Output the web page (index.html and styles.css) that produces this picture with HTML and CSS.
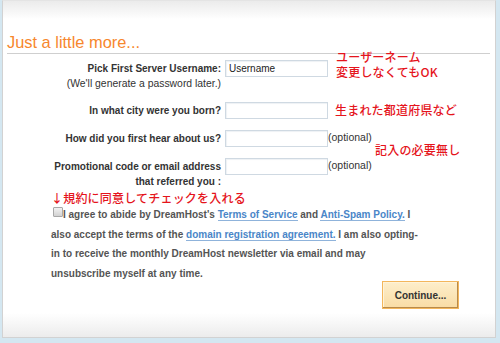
FILE: index.html
```html
<!DOCTYPE html>
<html lang="ja">
<head>
  <meta charset="UTF-8" />
  <title>Just a little more...</title>
  <link rel="stylesheet" href="styles.css">
</head>
<body>

<div class="panel">
  <h1>Just a little more...</h1>

  <div class="form">
    <div class="row">
      <div class="label"><b>Pick First Server Username:</b><br>(We'll generate a password later.)</div>
      <input class="field" type="text" value="Username">
      <div class="note note-up">ユーザーネーム<br>変更しなくてもOK</div>
    </div>

    <div class="row">
      <div class="label"><b>In what city were you born?</b></div>
      <input class="field" type="text">
      <div class="note">生まれた都道府県など</div>
    </div>

    <div class="row">
      <div class="label"><b>How did you first hear about us?</b></div>
      <input class="field" type="text">
      <span class="optional">(optional)</span>
      <div class="note note-down">記入の必要無し</div>
    </div>

    <div class="row">
      <div class="label"><b>Promotional code or email address<br>that referred you :</b></div>
      <input class="field" type="text">
      <span class="optional">(optional)</span>
    </div>
  </div>

  <div class="agree">
    <div class="hint">↓規約に同意してチェックを入れる</div>
    <p>
      <input class="check" type="checkbox">I agree to abide by DreamHost's <a href="#">Terms of Service</a> and <a href="#">Anti-Spam Policy.</a> I
      also accept the terms of the <a href="#">domain registration agreement.</a> I am also opting-in to receive the monthly DreamHost newsletter via email and may
      unsubscribe myself at any time.
    </p>
  </div>

  <div class="actions">
    <button>Continue...</button>
  </div>
</div>

</body>
</html>
```

FILE: styles.css
```css
body {
  margin: 0;
  background: #d4e7f1;
  font-family: 'Liberation Sans', Arial, sans-serif;
  color: #333;
}
.panel {
  width: 494px;
  height: 338px;
  margin-left: 2px;
  border: 1px solid #d2d2d2;
  border-top-color: #e4e4e4;
  background: linear-gradient(#ebebeb, #fafafa 14px, #fff 18px, #fff 312px, #ececec);
  box-sizing: border-box;
  padding-top: 32px;
}
h1 {
  margin: 0 5px 0 4px;
  font-size: 16.4px;
  line-height: 19px;
  font-weight: normal;
  color: #f7872d;
  border-bottom: 1px solid #cfcfcf;
  padding-bottom: 1px;
}
.form {
  margin-top: 6px;
  display: flex;
  flex-direction: column;
  gap: 11px;
}
.row {
  display: flex;
  align-items: flex-start;
  position: relative;
}
.label {
  width: 218px;
  text-align: right;
  font-size: 10.4px;
  line-height: 15px;
  padding-top: 1px;
}
.label b {
  font-size: 10px;
}
.field {
  width: 103px;
  height: 17px;
  margin: 0 0 0 4px;
  box-sizing: border-box;
  border: 1px solid #cfd9e2;
  box-shadow: inset 1px 1px 1px #eef1f4;
  padding: 0 3px;
  font-family: 'Liberation Sans', Arial, sans-serif;
  font-size: 10px;
  color: #222;
}
.optional {
  font-size: 10.5px;
  line-height: 15px;
}
.note {
  color: #e5141c;
  font-family: 'Noto Sans CJK JP', sans-serif;
  font-weight: 500;
  font-size: 12px;
  line-height: 15px;
  margin-left: 7px;
  letter-spacing: 0.2px;
}
.note-up {
  position: absolute;
  left: 326px;
  top: -11px;
}
.note-down {
  position: absolute;
  left: 365px;
  top: 12px;
}
.agree {
  margin: 1px 0 0 48px;
  width: 371px;
}
.hint {
  color: #e5141c;
  font-family: 'Noto Sans CJK JP', sans-serif;
  font-weight: 500;
  font-size: 12px;
  line-height: 15px;
  letter-spacing: 0.2px;
}
.agree p {
  margin: 0;
  font-size: 10px;
  font-weight: bold;
  line-height: 19.5px;
  color: #545454;
}
.agree a {
  color: #4a86c8;
  text-decoration: none;
  border-bottom: 1px solid #8fb3db;
}
.check {
  appearance: none;
  width: 10px;
  height: 10px;
  margin: 0 0 0 2px;
  vertical-align: 1px;
  border: 1px solid #a8a8a8;
  border-radius: 1px;
  background: linear-gradient(#f2f2f2, #d2d2d2);
}
.actions {
  display: flex;
  justify-content: flex-end;
  padding-right: 36px;
  margin-top: -2px;
}
button {
  width: 77px;
  height: 28px;
  border: 1px solid #f3b65c;
  box-shadow: inset -1px -1px 0 #b88a4a, inset 1px 1px 0 #fff3d8;
  background: linear-gradient(#fdeecb, #f9dca4);
  font-family: 'Liberation Sans', Arial, sans-serif;
  font-size: 10px;
  font-weight: bold;
  color: #333;
  cursor: pointer;
}
```
